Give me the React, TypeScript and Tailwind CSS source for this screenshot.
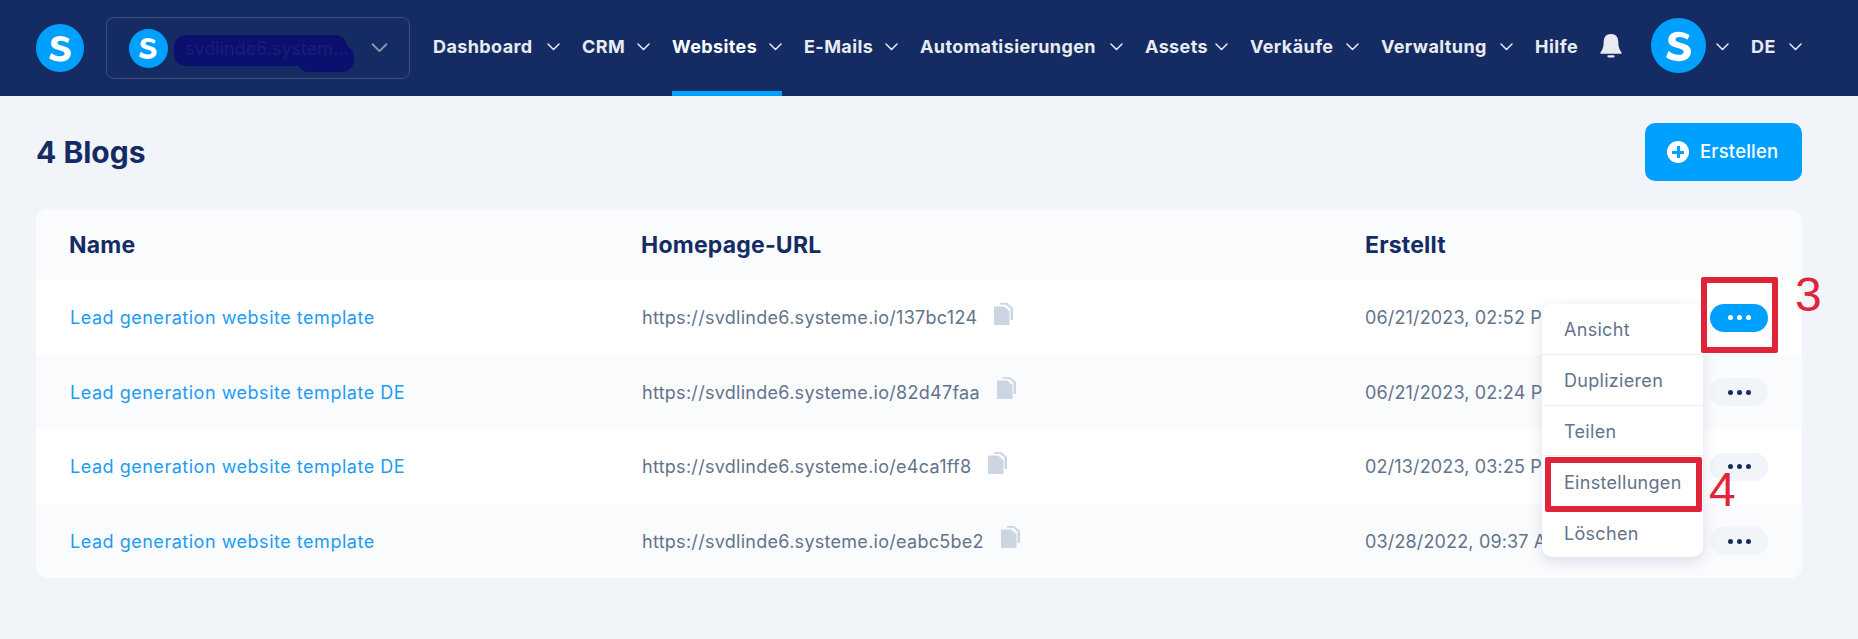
const Logo = ({ className }: { className: string }) => (
  <div className={`${className} rounded-full bg-[#00a0ff] flex items-center justify-center shrink-0`}>
    <svg viewBox="0 0 24 24" className="w-[72%] h-[72%]">
      <path d="M18.5 5.6 C16.5 4.3 14.3 3.5 11.9 3.5 C8.1 3.5 5.6 5.6 5.6 8.6 C5.6 14 15 12.6 15 15.6 C15 16.8 13.8 17.5 12 17.5 C9.7 17.5 7.6 16.6 5.7 15.2 L4.3 19 C6.4 20.5 9 21.3 11.8 21.3 C16.3 21.3 19.4 19.1 19.4 15.4 C19.4 9.6 10 11 10 8.2 C10 7.2 11 6.7 12.4 6.7 C14.1 6.7 15.8 7.3 17.3 8.4 Z" fill="white" />
    </svg>
  </div>
)

const Chevron = ({ className }: { className: string }) => (
  <svg viewBox="0 0 13 8" fill="none" className={className}>
    <path d="M1 1 L6.5 6.5 L12 1" stroke="currentColor" strokeWidth="1.5" strokeLinecap="round" strokeLinejoin="round" />
  </svg>
)

const navItems = [
  { label: "Dashboard", width: "w-[102px]" },
  { label: "CRM", width: "w-[43px]" },
  { label: "Websites", width: "w-[85px]", active: true },
  { label: "E-Mails", width: "w-[69px]" },
  { label: "Automatisierungen", width: "w-[178px]" },
  { label: "Assets", width: "w-[58px]" },
  { label: "Verkäufe", width: "w-[84px]" },
  { label: "Verwaltung", width: "w-[107px]" },
]

const CopyIcon = () => (
  <svg viewBox="0 0 19 22" className="w-[19px] h-[22px] ml-[17px] -mt-[8px]">
    <path d="M6 0 H13 L19 5 V17 H16.5 V5.5 L12 1.8 H6 Z" fill="#ccd6e3" />
    <path d="M0 3.5 H10 L15.5 8 V22 H0 Z" fill="#ccd6e3" />
  </svg>
)

const rows = [
  { name: "Lead generation website template", url: "https://svdlinde6.systeme.io/137bc124", date: "06/21/2023, 02:52 PM" },
  { name: "Lead generation website template DE", url: "https://svdlinde6.systeme.io/82d47faa", date: "06/21/2023, 02:24 PM" },
  { name: "Lead generation website template DE", url: "https://svdlinde6.systeme.io/e4ca1ff8", date: "02/13/2023, 03:25 PM" },
  { name: "Lead generation website template", url: "https://svdlinde6.systeme.io/eabc5be2", date: "03/28/2022, 09:37 AM" },
]

const menu = ["Ansicht", "Duplizieren", "Teilen", "Einstellungen", "Löschen"]

export default function App() {
  return (
    <div className="relative w-[1858px] h-[639px] overflow-hidden bg-[#f1f4f9] font-['Inter',sans-serif]">
      <header className="h-[96px] bg-[#142c63] flex items-center pl-[36px]">
        <Logo className="w-[48px] h-[48px]" />
        <div className="w-[304px] h-[62px] ml-[22px] rounded-[8px] border border-[#3d5178] flex items-center pl-[22px]">
          <Logo className="w-[39px] h-[39px]" />
          <div className="relative ml-[17px] w-[168px]">
            <span className="relative z-10 block text-[18px] text-[#181e78] truncate">svdlinde6.system...</span>
            <div className="absolute -left-[11px] right-[6px] top-0 h-[31px] rounded-[12px] bg-[#0b0f6e]" />
            <div className="absolute left-[112px] -right-[1px] top-[10px] h-[27px] rounded-[12px] bg-[#0b0f6e]" />
          </div>
          <Chevron className="w-[17px] h-[10px] ml-[18px] text-[#8d98ad]" />
        </div>
        <div className="h-full flex items-center ml-[23px]">
          {navItems.map(n => (
            <div key={n.label} className="relative h-full flex items-center mr-[22px]">
              <span className={`${n.width} -mt-[3px] whitespace-nowrap text-[18px] font-bold tracking-[0.4px] ${n.active ? "text-white" : "text-[#e8ebf0]"}`}>{n.label}</span>
              <Chevron className="w-[13px] h-[8px] ml-[12px] -mt-[3px] text-[#e8ebf0]" />
              {n.active && <div className="absolute bottom-0 left-0 right-0 h-[5px] bg-[#00a0ff]" />}
            </div>
          ))}
          <span className="w-[43px] -mt-[3px] whitespace-nowrap text-[18px] font-bold tracking-[0.5px] text-[#e8ebf0]">Hilfe</span>
        </div>
        <svg viewBox="0 0 24 26" className="w-[22px] h-[24px] ml-[22px] -mt-[5px]">
          <path d="M12 0 C6.5 0 4 3.5 4 9 C4 14 3 17 0.5 20 V21.5 H23.5 V20 C21 17 20 14 20 9 C20 3.5 17.5 0 12 0 Z" fill="#e8ebf0" />
          <rect x="8" y="23" width="8" height="2.5" rx="1.2" fill="#e8ebf0" />
        </svg>
        <Logo className="w-[55px] h-[55px] ml-[29px] -mt-[5px]" />
        <Chevron className="w-[13px] h-[8px] ml-[10px] -mt-[3px] text-[#e8ebf0]" />
        <span className="w-[26px] ml-[22px] -mt-[3px] text-[18px] font-bold tracking-[0.4px] text-[#e8ebf0]">DE</span>
        <Chevron className="w-[13px] h-[8px] ml-[12px] -mt-[3px] text-[#e8ebf0]" />
      </header>

      <div className="pl-[36px] pr-[56px]">
        <div className="h-[113px] flex items-start justify-between pt-[27px]">
          <h1 className="text-[30px] leading-[58px] font-bold text-[#142c63]">4 Blogs</h1>
          <button className="w-[157px] h-[58px] rounded-[10px] bg-[#00a0ff] flex items-center text-white text-[18.5px] font-medium tracking-[0.2px] pl-[22px]">
            <span className="w-[22px] h-[22px] rounded-full bg-white flex items-center justify-center mr-[11px]">
              <span className="relative w-[12px] h-[12px]">
                <span className="absolute left-[4.5px] top-0 w-[3px] h-[12px] bg-[#00a0ff]" />
                <span className="absolute top-[4.5px] left-0 w-[12px] h-[3px] bg-[#00a0ff]" />
              </span>
            </span>
            Erstellen
          </button>
        </div>

        <div className="rounded-[12px] bg-[#fafbfd] overflow-hidden">
          <div className="h-[71px] flex items-center pl-[33px] pt-[2px] text-[23px] font-bold tracking-[0.2px] text-[#142c63]">
            <div className="w-[572px]">Name</div>
            <div className="w-[724px]">Homepage-URL</div>
            <div>Erstellt</div>
          </div>
          {rows.map((r, i) => (
            <div key={r.url} className={`h-[74.5px] flex items-center pl-[34px] pt-[1px] text-[18px] ${i % 2 === 0 ? "bg-white" : "bg-[#fafbfd]"}`}>
              <div className="w-[573px] text-[#1d9bf5] tracking-[0.52px]">{r.name}</div>
              <div className="w-[722px] flex items-center text-[#63738c] tracking-[0.28px] -ml-[1px] mr-[1px]">{r.url}<CopyIcon /></div>
              <div className="text-[#63738c] w-[345px] whitespace-nowrap tracking-[0.15px]">{r.date}</div>
              <button className={`w-[58px] h-[28px] rounded-[14px] flex items-center justify-center gap-[4px] ${i === 0 ? "bg-[#00a0ff]" : "bg-[#f1f4f9]"}`}>
                <span className={`w-[5px] h-[5px] rounded-full ${i === 0 ? "bg-white" : "bg-[#142c63]"}`} />
                <span className={`w-[5px] h-[5px] rounded-full ${i === 0 ? "bg-white" : "bg-[#142c63]"}`} />
                <span className={`w-[5px] h-[5px] rounded-full ${i === 0 ? "bg-white" : "bg-[#142c63]"}`} />
              </button>
            </div>
          ))}
        </div>
      </div>

      {/* dropdown over the table */}
      <div className="absolute left-[1542px] top-[304px] w-[161px] h-[253px] rounded-[10px] bg-white shadow-[0_4px_14px_rgba(20,44,99,0.15)] flex flex-col text-[18px] tracking-[0.3px] text-[#63738c]">
        {menu.map((m, i) => (
          <div key={m} className={`flex-1 flex items-center pl-[22px] pt-[2px] ${i < menu.length - 1 ? "border-b border-[#eceff4]" : ""}`}>{m}</div>
        ))}
      </div>

      {/* red annotations drawn on the screenshot */}
      <div className="absolute left-[1701px] top-[277px] w-[77px] h-[76px] border-[6px] border-[#e0243a] rounded-[2px]" />
      <div className="absolute left-[1545px] top-[457px] w-[157px] h-[55px] border-[6px] border-[#e0243a] rounded-[2px]" />
      <span className="absolute left-[1795px] top-[270px] text-[48px] leading-[50px] text-[#e0243a] font-['Liberation_Sans',sans-serif]">3</span>
      <span className="absolute left-[1709px] top-[465px] text-[48px] leading-[50px] text-[#e0243a] font-['Liberation_Sans',sans-serif]">4</span>
    </div>
  )
}
